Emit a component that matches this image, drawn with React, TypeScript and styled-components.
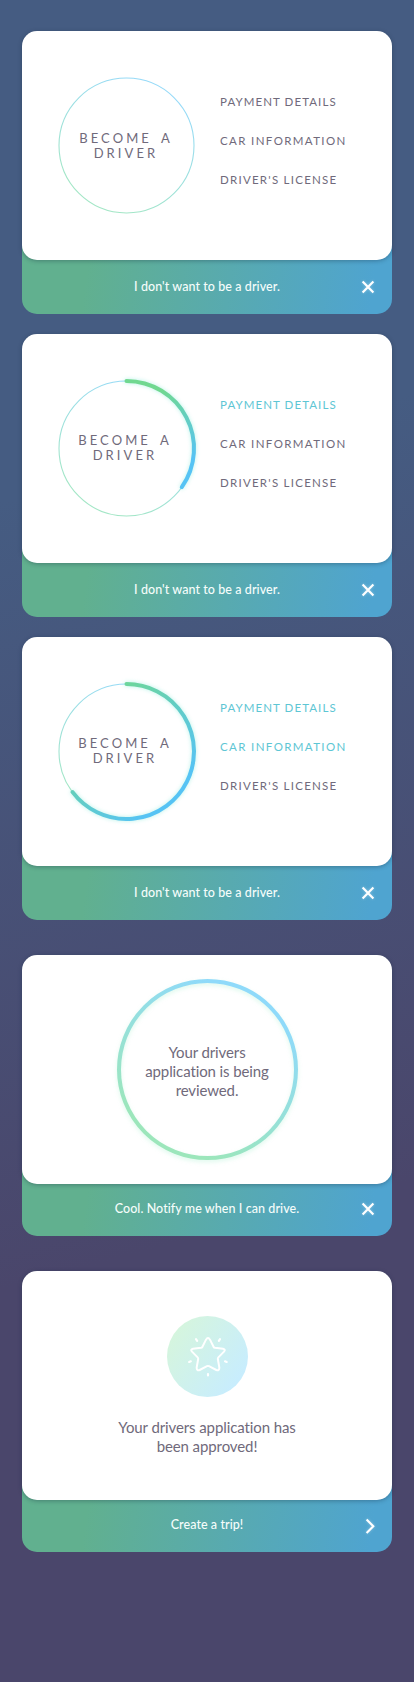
import React from "react";
import styled, { createGlobalStyle } from "styled-components";

const GlobalStyle = createGlobalStyle`
  body {
    margin: 0;
    font-family: Lato, "Open Sans", sans-serif;
    color: #706a7b;
    background: #4a466b;
  }
`;

const Page = styled.main`
  box-sizing: border-box;
  min-height: 1682px;
  padding: 31px 22px 0;
  background: linear-gradient(165deg, #455c82 28%, #4a466b 72%);
`;

const Card = styled.section<{ $gap?: number }>`
  margin-top: ${(p) => p.$gap ?? 0}px;
`;

const Panel = styled.div`
  position: relative;
  z-index: 1;
  box-sizing: border-box;
  height: 229px;
  border-radius: 15px;
  background: #fff;
  box-shadow: 0 1px 4px rgba(20, 40, 60, 0.35);
`;

const StepsPanel = styled(Panel)`
  display: grid;
  grid-template-columns: 145px 1fr;
  column-gap: 21px;
  padding-left: 32px;
`;

const CenteredPanel = styled(Panel)`
  display: grid;
  place-items: center;
`;

const ApprovedPanel = styled(Panel)`
  display: flex;
  flex-direction: column;
  align-items: center;
  padding-top: 45px;
`;

const Footer = styled.footer<{ $height: number }>`
  display: grid;
  grid-template-columns: 1fr auto 1fr;
  align-items: center;
  box-sizing: border-box;
  height: ${(p) => p.$height + 15}px;
  margin-top: -15px;
  padding: 15px 17px 0;
  border-radius: 0 0 15px 15px;
  background: linear-gradient(98deg, #61b08f 18%, #4fa4d0 94%);
`;

const FooterText = styled.span<{ $lift?: number }>`
  grid-column: 2;
  padding-bottom: ${(p) => p.$lift ?? 1}px;
  font-size: 12.5px;
  font-weight: 500;
  letter-spacing: 0.07px;
  color: #f5fdfb;
  white-space: nowrap;
`;

const FooterButton = styled.button<{ $lift?: number }>`
  justify-self: end;
  display: flex;
  padding: 0 0 ${(p) => p.$lift ?? 0}px;
  border: 0;
  background: none;
  filter: drop-shadow(0 0 1.5px rgba(255, 255, 255, 0.35));
`;

const RingBox = styled.div<{ $size: number }>`
  display: grid;
  place-items: center;
  align-self: center;
  justify-self: center;
  width: ${(p) => p.$size}px;
  height: ${(p) => p.$size}px;

  & > * {
    grid-area: 1 / 1;
  }
`;

const Title = styled.h2<{ $shifted: boolean }>`
  margin: 0;
  padding: ${(p) => (p.$shifted ? "0 3px 2px 0" : "0 1px 0 0")};
  font-size: 13px;
  font-weight: 400;
  line-height: 15px;
  letter-spacing: 3.1px;
  word-spacing: 3px;
  text-align: center;
`;

const StepList = styled.ul`
  margin: 51px 0 0;
  padding: 0;
  list-style: none;
`;

const Step = styled.li<{ $done: boolean; $tracking: number }>`
  font-size: 11.5px;
  line-height: 39px;
  letter-spacing: ${(p) => p.$tracking}px;
  color: ${(p) => (p.$done ? "#5ec6d4" : "inherit")};
`;

const Message = styled.p<{ $top?: number }>`
  margin: ${(p) => p.$top ?? 0}px 0 0;
  font-size: 15px;
  line-height: 19px;
  letter-spacing: -0.1px;
  text-align: center;
`;

const Glow = styled.path`
  filter: drop-shadow(0 0 2px rgba(80, 225, 200, 0.4));
`;

const SoftRing = styled.circle`
  filter: drop-shadow(0 2px 2px rgba(120, 230, 180, 0.25));
`;

const CloseIcon = () => (
  <svg width="14" height="14" viewBox="0 0 14 14" fill="none" stroke="#fff" strokeWidth="2.1">
    <path d="M1.6 1.4 12.4 12.6M12.4 1.4 1.6 12.6" />
  </svg>
);

const ChevronIcon = () => (
  <svg width="10" height="16" viewBox="0 0 10 16" fill="none" stroke="#fff" strokeWidth="2.1">
    <path d="M1.6 1.4 8.3 8.2 1.6 15" />
  </svg>
);

const StarBadge = () => (
  <svg width="81" height="81" viewBox="5 3 243 243" fill="none" stroke="#fff" strokeLinecap="round" strokeLinejoin="round">
    <defs>
      <linearGradient id="badge" x1="0.1" y1="0.2" x2="0.9" y2="0.75">
        <stop offset="0" stopColor="#d5f5de" />
        <stop offset="1" stopColor="#c8edfd" />
      </linearGradient>
    </defs>
    <circle cx="126.5" cy="124.5" r="121.5" fill="url(#badge)" stroke="none" />
    <path
      strokeWidth="6"
      d="M122 74Q128 64 134 74L145 96Q146 98 149 98.500L173 101Q182 103 176 110L159 127Q157 129 157.500 132L162 158Q162 168 153 165L131 153.500Q128 152 125 153.500L103 165Q94 168 94 158L98.500 132Q99 129 97 127L80 110Q74 103 83 101L107 98.500Q110 98 111 96Z"
    />
    <path strokeWidth="6.500" d="M92 72.500 95.500 77.500M164 72.500 160.500 77.500M71.500 141 76.500 139M179 139 184 141M128 177V181.500" />
  </svg>
);

// Points on the progress ring; angles run clockwise from the top.
const CENTER = 72.5;
const RADIUS = 67.5;
const pointAt = (deg: number) => {
  const a = (deg * Math.PI) / 180;
  return `${(CENTER + RADIUS * Math.sin(a)).toFixed(2)} ${(CENTER - RADIUS * Math.cos(a)).toFixed(2)}`;
};

const ARCS = [
  null,
  { end: 125, x1: 95, y1: 20, x2: 128, y2: 88 },
  { end: 233, x1: 35, y1: 20, x2: 120, y2: 110 },
];

const ProgressRing = ({ done }: { done: number }) => {
  const arc = ARCS[done];
  return (
    <svg width="145" height="145" overflow="visible" fill="none">
      <defs>
        <linearGradient id={`track${done}`} x1="0.75" y1="0.1" x2="0.3" y2="0.9">
          <stop offset="0" stopColor="#96daf8" />
          <stop offset="1" stopColor="#a3e6c6" />
        </linearGradient>
        {arc && (
          <linearGradient id={`arc${done}`} gradientUnits="userSpaceOnUse" x1={arc.x1} y1={arc.y1} x2={arc.x2} y2={arc.y2}>
            <stop offset="0" stopColor="#70d890" />
            <stop offset="1" stopColor="#56c3f4" />
          </linearGradient>
        )}
      </defs>
      <circle cx={CENTER} cy={CENTER} r={RADIUS} stroke={`url(#track${done})`} strokeWidth="1.1" />
      {arc && (
        <Glow
          d={`M${pointAt(0)}A${RADIUS} ${RADIUS} 0 ${arc.end > 180 ? 1 : 0} 1 ${pointAt(arc.end)}`}
          stroke={`url(#arc${done})`}
          strokeWidth="4"
          strokeLinecap="round"
        />
      )}
    </svg>
  );
};

const STEPS = [
  { label: "PAYMENT DETAILS", tracking: 1.08 },
  { label: "CAR INFORMATION", tracking: 1.37 },
  { label: "DRIVER'S LICENSE", tracking: 1.25 },
];

const StepsCard = ({ done, gap }: { done: number; gap?: number }) => (
  <Card $gap={gap}>
    <StepsPanel>
      <RingBox $size={145}>
        <ProgressRing done={done} />
        <Title $shifted={done > 0}>
          BECOME A<br />
          DRIVER
        </Title>
      </RingBox>
      <StepList>
        {STEPS.map((step, i) => (
          <Step key={step.label} $done={i < done} $tracking={step.tracking}>
            {step.label}
          </Step>
        ))}
      </StepList>
    </StepsPanel>
    <Footer $height={54}>
      <FooterText>I don't want to be a driver.</FooterText>
      <FooterButton aria-label="Close">
        <CloseIcon />
      </FooterButton>
    </Footer>
  </Card>
);

export default function App() {
  return (
    <>
      <GlobalStyle />
      <Page>
        <StepsCard done={0} />
        <StepsCard done={1} gap={20} />
        <StepsCard done={2} gap={20} />
        <Card $gap={35}>
          <CenteredPanel>
            <RingBox $size={181}>
              <svg width="181" height="181" overflow="visible" fill="none">
                <defs>
                  <linearGradient id="review" x1="0.72" y1="0.12" x2="0.28" y2="0.88">
                    <stop offset="0" stopColor="#8fdafa" />
                    <stop offset="1" stopColor="#9ce6bb" />
                  </linearGradient>
                </defs>
                <SoftRing cx="90.5" cy="90.5" r="88.5" stroke="url(#review)" strokeWidth="4" />
              </svg>
              <Message $top={4}>
                Your drivers
                <br />
                application is being
                <br />
                reviewed.
              </Message>
            </RingBox>
          </CenteredPanel>
          <Footer $height={52}>
            <FooterText $lift={3}>Cool. Notify me when I can drive.</FooterText>
            <FooterButton aria-label="Close" $lift={2}>
              <CloseIcon />
            </FooterButton>
          </Footer>
        </Card>
        <Card $gap={35}>
          <ApprovedPanel>
            <StarBadge />
            <Message $top={21}>
              Your drivers application has
              <br />
              been approved!
            </Message>
          </ApprovedPanel>
          <Footer $height={52}>
            <FooterText $lift={3}>Create a trip!</FooterText>
            <FooterButton aria-label="Continue">
              <ChevronIcon />
            </FooterButton>
          </Footer>
        </Card>
      </Page>
    </>
  );
}
